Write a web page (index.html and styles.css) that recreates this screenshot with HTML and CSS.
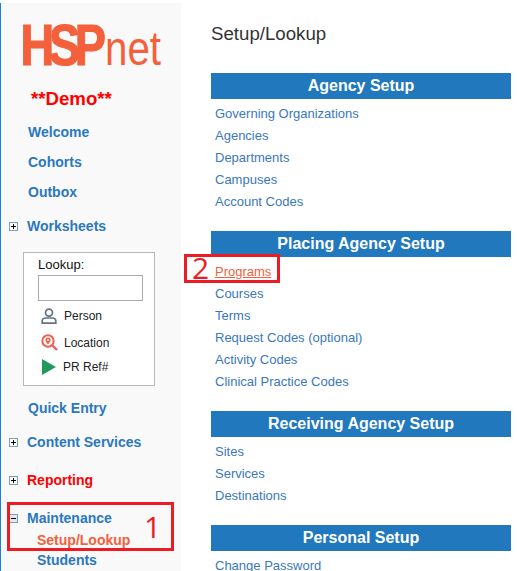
FILE: index.html
```html
<!DOCTYPE html>
<html lang="en">
<head>
<meta charset="utf-8">
<title>Setup/Lookup</title>
<link rel="stylesheet" href="styles.css">
</head>
<body>
<div class="page">
  <aside class="sidebar">
    <svg class="logo" width="140" height="48" viewBox="0 0 140 48" aria-label="HSPnet">
      <text class="logo-hsp" transform="scale(.82,1)" x="-3" y="43">HSP</text>
      <text class="logo-net" x="82" y="43" textLength="56" lengthAdjust="spacingAndGlyphs">net</text>
    </svg>
    <div class="demo">**Demo**</div>
    <nav class="plain-links">
      <a class="nav-link">Welcome</a>
      <a class="nav-link">Cohorts</a>
      <a class="nav-link">Outbox</a>
    </nav>
    <div class="tree-row worksheets">
      <span class="toggle toggle-plus"></span><a class="nav-link">Worksheets</a>
    </div>
    <div class="lookup">
      <label class="lookup-label">Lookup:</label>
      <input class="lookup-input" type="text">
      <div class="lookup-row person">
        <svg class="lookup-icon" width="16" height="16" viewBox="0 0 16 16"><circle cx="8" cy="4.600" r="3.500" fill="none" stroke="#667282" stroke-width="1.700"/><path d="M1.200 15.200v-2.200c0-2 1.800-3 3.800-3h6c2 0 3.800 1 3.800 3v2.200z" fill="none" stroke="#667282" stroke-width="1.700"/></svg>
        <span>Person</span>
      </div>
      <div class="lookup-row location">
        <svg class="lookup-icon" width="17" height="17" viewBox="0 0 17 17"><circle cx="7" cy="7" r="5.700" fill="none" stroke="#f0624a" stroke-width="2"/><path d="M7 3.400a2.600 2.600 0 0 1 2.600 2.600C9.600 7.800 7 10.400 7 10.400S4.400 7.800 4.400 6A2.600 2.600 0 0 1 7 3.400z" fill="#f0624a"/><circle cx="7" cy="6" r="1" fill="#fff"/><path d="M11 11l5 5" stroke="#ee5a6a" stroke-width="2.400"/></svg>
        <span>Location</span>
      </div>
      <div class="lookup-row ref">
        <svg class="lookup-icon" width="14" height="16" viewBox="0 0 14 16"><path d="M0 0l14 8L0 16z" fill="#21995c"/></svg>
        <span>PR Ref#</span>
      </div>
    </div>
    <a class="nav-link quick">Quick Entry</a>
    <div class="tree-row content-services">
      <span class="toggle toggle-plus"></span><a class="nav-link">Content Services</a>
    </div>
    <div class="tree-row reporting">
      <span class="toggle toggle-plus"></span><a class="nav-link red">Reporting</a>
    </div>
    <div class="tree-row maintenance">
      <span class="toggle toggle-minus"></span><a class="nav-link">Maintenance</a>
    </div>
    <div class="sub-links">
      <a class="nav-link current">Setup/Lookup</a>
      <a class="nav-link">Students</a>
    </div>
    <div class="callout callout-one"><span class="callout-num">1</span></div>
  </aside>
  <main class="content">
    <h1 class="title">Setup/Lookup</h1>
    <section class="group">
      <h2 class="band">Agency Setup</h2>
      <ul class="links">
        <li><a>Governing Organizations</a></li>
        <li><a>Agencies</a></li>
        <li><a>Departments</a></li>
        <li><a>Campuses</a></li>
        <li><a>Account Codes</a></li>
      </ul>
    </section>
    <section class="group">
      <h2 class="band">Placing Agency Setup</h2>
      <ul class="links">
        <li class="programs"><a class="active">Programs</a><div class="callout callout-two"><span class="callout-num">2</span></div></li>
        <li><a>Courses</a></li>
        <li><a>Terms</a></li>
        <li><a>Request Codes (optional)</a></li>
        <li><a>Activity Codes</a></li>
        <li><a>Clinical Practice Codes</a></li>
      </ul>
    </section>
    <section class="group">
      <h2 class="band">Receiving Agency Setup</h2>
      <ul class="links">
        <li><a>Sites</a></li>
        <li><a>Services</a></li>
        <li><a>Destinations</a></li>
      </ul>
    </section>
    <section class="group">
      <h2 class="band">Personal Setup</h2>
      <ul class="links">
        <li><a>Change Password</a></li>
      </ul>
    </section>
  </main>
</div>
</body>
</html>
```
FILE: styles.css
```css
* { box-sizing: border-box; }
html, body { margin: 0; height: 100%; overflow: hidden; background: #fff; }
body { font-family: "Liberation Sans", Arial, sans-serif; color: #222; }
.page {
  display: flex;
  height: 571px;
  overflow: hidden;
  border-top: 3px solid transparent;
  position: relative;
}
.page::before {
  content: "";
  position: absolute;
  left: 0; right: 0; top: -1px;
  height: 1px;
  background: #ddd;
}
.sidebar {
  position: relative;
  width: 181px;
  flex: none;
  background: #f9f9f9;
  border-left: 1px solid #1b82d6;
  display: flex;
  flex-direction: column;
  align-items: flex-start;
}
.logo { margin: 19px 0 0 22px; display: block; overflow: visible; }
.logo-hsp { font: 700 57px "Liberation Sans", Arial, sans-serif; letter-spacing: -6.5px; fill: #f4603c; stroke: #f4603c; stroke-width: 1.2px; }
.logo-net { font: 400 48px "Liberation Sans", Arial, sans-serif; fill: #f4603c; }
.demo { margin: 18px 0 0 30px; font-size: 18.67px; line-height: 22px; font-weight: 700; color: #f00; }
.plain-links { display: flex; flex-direction: column; gap: 12px; margin: 13px 0 0 27px; }
.nav-link { display: block; font-size: 14px; line-height: 18px; font-weight: 700; color: #2a78bd; }
.tree-row { display: flex; align-items: center; margin-left: 8px; gap: 9px; }
.toggle {
  width: 9px; height: 9px; flex: none;
  border: 1px solid #7c9cc0;
  background-color: #fff;
  background-repeat: no-repeat;
}
.toggle-plus {
  background-image: linear-gradient(#000, #000), linear-gradient(#000, #000);
  background-size: 5px 1px, 1px 5px;
  background-position: center, center;
}
.toggle-minus {
  background-color: #e4e8ee;
  background-image: linear-gradient(#000, #000);
  background-size: 5px 1px;
  background-position: center;
}
.worksheets { margin-top: 16px; }
.lookup {
  width: 132px;
  height: 134px;
  margin: 17px 0 0 22px;
  background: #fff;
  border: 1px solid #b8b8b8;
  padding: 4px 0 0 14px;
  font-size: 12px;
}
.lookup-label { display: block; font-size: 13px; line-height: 16px; color: #111; }
.lookup-input { display: block; width: 105px; height: 26px; margin: 2px 0 0 0; border: 1px solid #aaa; background: #fff; padding: 0; }
.lookup-row { display: flex; align-items: center; color: #222; line-height: 16px; }
.lookup-icon { flex: none; display: block; }
.person { margin: 7px 0 0 0; gap: 7px; padding-left: 3px; }
.location { margin: 10px 0 0 0; gap: 6px; padding-left: 3px; }
.ref { margin: 8px 0 0 0; gap: 7px; padding-left: 4px; }
.quick { margin: 13px 0 0 27px; }
.content-services { margin-top: 16px; }
.reporting { margin-top: 20px; }
.maintenance { margin-top: 20px; }
.red { color: #f00; }
.sub-links { margin: 4px 0 0 36px; display: flex; flex-direction: column; gap: 2px; }
.current { color: #f4603c; }
.callout { position: absolute; border: 3px solid #ed1c24; pointer-events: none; }
.callout-num { position: absolute; font-size: 30px; line-height: 30px; color: #ed1c24; font-family: "Open Sans", sans-serif; }
.callout-one { left: 6px; top: 499px; width: 167px; height: 49px; }
.callout-one .callout-num { left: 134px; top: 7px; }
.callout-two { left: -31px; top: -6px; width: 96px; height: 29px; }
.callout-two .callout-num { left: 5px; top: -4px; }
.content { flex: 1; padding: 0 6px 0 30px; min-width: 0; }
.title { margin: 19px 0 0 0; font-size: 18.67px; line-height: 24px; font-weight: 400; color: #333; }
.group { margin-bottom: 19px; }
.title + .group { margin-top: 27px; }
.band {
  margin: 0 0 3px;
  height: 26px;
  background: #2178bc;
  color: #fff;
  font-size: 16px;
  line-height: 26px;
  font-weight: 700;
  text-align: center;
}
.links { list-style: none; margin: 0; padding: 0 0 0 4px; }
.links li { position: relative; height: 22px; font-size: 13px; line-height: 24px; }
.links a { color: #3a78bd; }
.links a.active { color: #f4603c; text-decoration: underline; }
```
